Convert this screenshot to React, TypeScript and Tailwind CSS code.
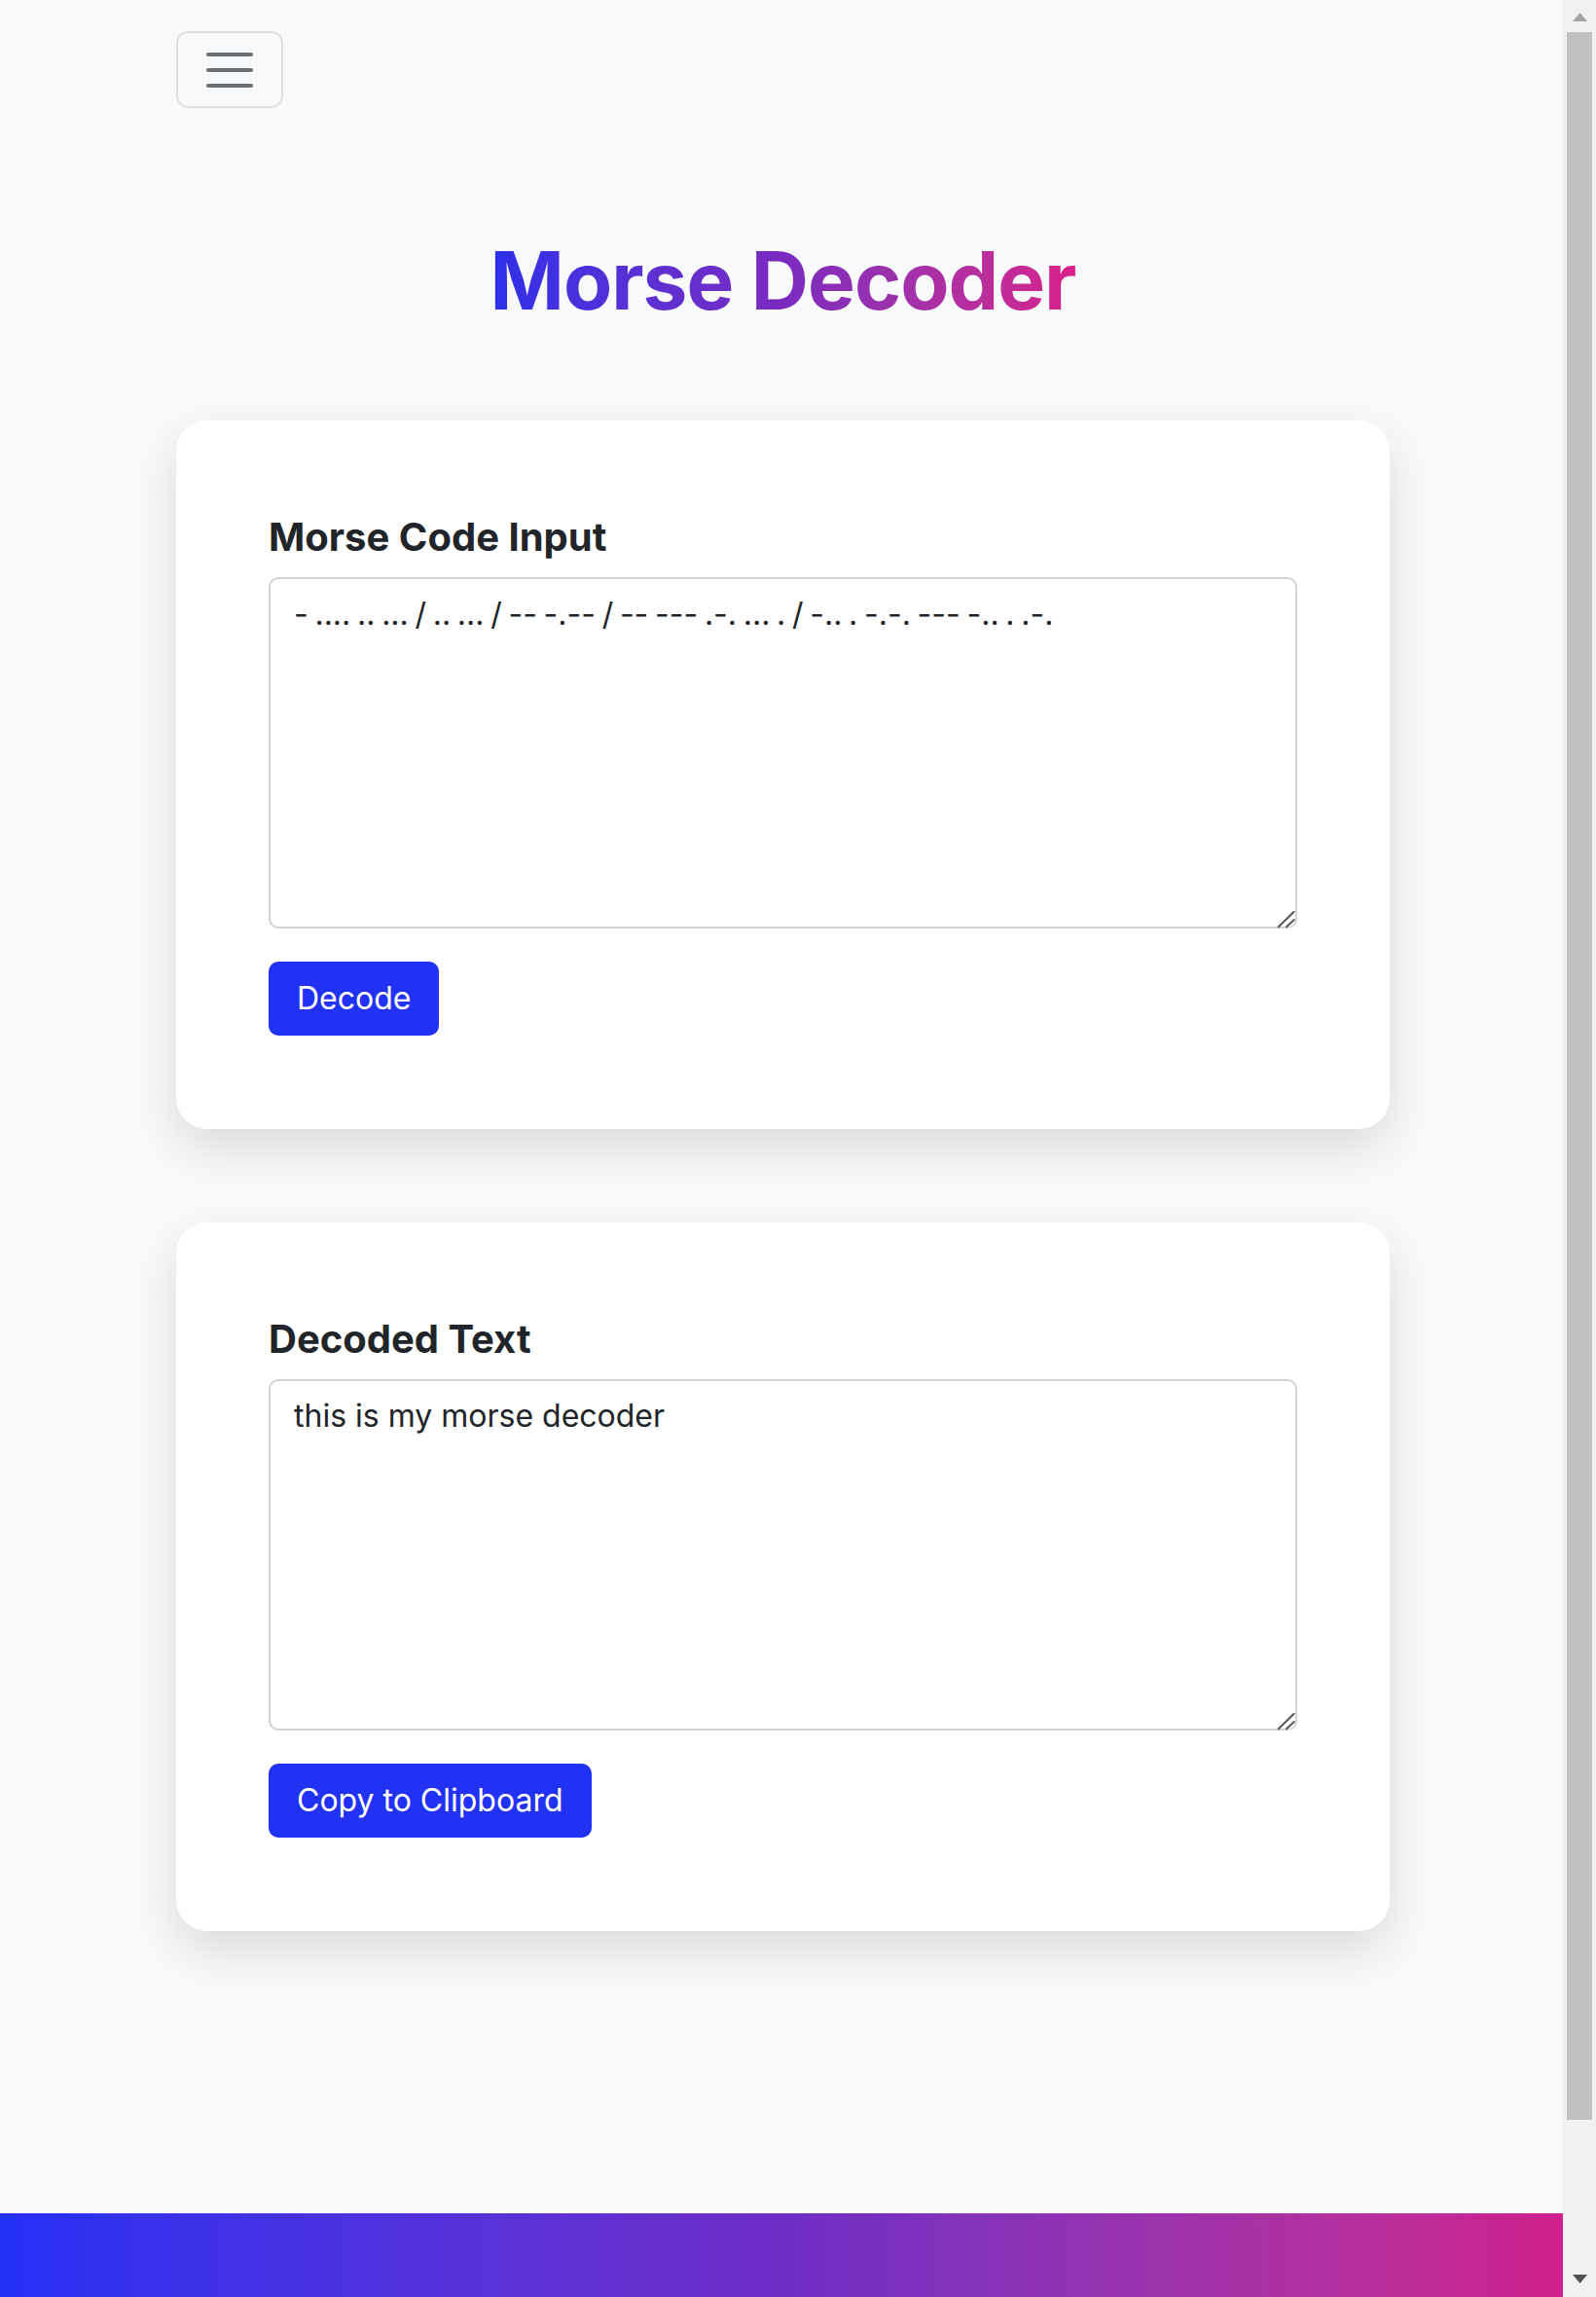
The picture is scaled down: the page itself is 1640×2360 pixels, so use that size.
import React from "react";

const MORSE =
  "- .... .. ... / .. ... / -- -.-- / -- --- .-. ... . / -.. . -.-. --- -.. . .-.";

function Card({
  label,
  value,
  button,
  tight,
}: {
  label: string;
  value: string;
  button: string;
  tight?: boolean;
}) {
  return (
    <section className="rounded-[32px] bg-white px-[95px] py-[96px] shadow-[0_20px_50px_rgba(0,0,0,0.12)]">
      <label className="mb-[17px] block text-[40px] font-bold leading-[48px] tracking-normal text-[#212529]">
        {label}
      </label>
      <div className="relative">
        <textarea
          defaultValue={value}
          className={
            tight
              ? "block h-[361px] w-full resize-none rounded-[10px] border-2 border-[#ced4da] bg-white px-[24px] py-[12px] text-[32px] leading-[48px] text-[#212529] outline-none [word-spacing:-2.3px]"
              : "block h-[361px] w-full resize-none rounded-[10px] border-2 border-[#ced4da] bg-white px-[24px] py-[12px] text-[32px] leading-[48px] text-[#212529] outline-none"
          }
        />
        <svg
          className="pointer-events-none absolute bottom-0 right-0"
          width="22"
          height="22"
          viewBox="0 0 22 22"
        >
          <path
            d="M2.7 20.3L18.7 4.7M11 20.3L18.7 13"
            stroke="#555"
            strokeWidth="2"
            strokeLinecap="round"
            fill="none"
          />
        </svg>
      </div>
      <button className="mt-[34px] h-[76px] rounded-[10px] bg-[#2232f5] px-[29px] text-[32px] leading-[48px] text-white">
        {button}
      </button>
    </section>
  );
}

function Scrollbar() {
  return (
    <div className="flex w-[34px] shrink-0 flex-col bg-[#f1f1f1]">
      <div className="flex h-[32px] items-start justify-center pt-[13px]">
        <svg width="15" height="9" viewBox="0 0 15 9">
          <polygon points="7.5,0 15,9 0,9" fill="#a3a3a3" />
        </svg>
      </div>
      <div className="mx-[4px] mt-[1px] h-[2145px] bg-[#c1c1c1]" />
      <div className="flex-1" />
      <div className="flex h-[32px] items-start justify-center pt-[9px]">
        <svg width="15" height="9" viewBox="0 0 15 9">
          <polygon points="0,0 15,0 7.5,9" fill="#505050" />
        </svg>
      </div>
    </div>
  );
}

export default function App() {
  return (
    <div className="flex h-screen overflow-hidden font-['Inter',sans-serif] text-[#212529]">
      <div className="min-w-0 flex-1 overflow-hidden bg-[#f8f9fa]">
        <div className="ml-[181px] w-[1247px]">
          <nav className="pt-[32px]">
            <button
              aria-label="Toggle navigation"
              className="flex h-[79px] w-[110px] items-center justify-center rounded-[12px] border-2 border-[#dfe0e2]"
            >
              <svg width="60" height="60" viewBox="0 0 30 30">
                <path
                  d="M4 7h22M4 15h22M4 23h22"
                  stroke="#6b6e71"
                  strokeWidth="2"
                  strokeLinecap="round"
                  fill="none"
                />
              </svg>
            </button>
          </nav>

          <h1 className="mt-[129px] text-center text-[82px] font-bold leading-[98px] tracking-[-0.012em]">
            <span className="inline-block bg-linear-to-r from-[#2a2eea] via-[#7b29bf] to-[#d81f8a] bg-clip-text text-transparent">
              Morse Decoder
            </span>
          </h1>

          <main className="mt-[94px] flex flex-col gap-[96px]">
            <Card label="Morse Code Input" value={MORSE} button="Decode" tight />
            <Card
              label="Decoded Text"
              value="this is my morse decoder"
              button="Copy to Clipboard"
            />
          </main>
        </div>

        <footer className="mt-[290px] h-[254px] bg-linear-to-r from-[#2230f5] via-[#6e2cc6] to-[#cf1f8d]" />
      </div>
      <Scrollbar />
    </div>
  );
}
